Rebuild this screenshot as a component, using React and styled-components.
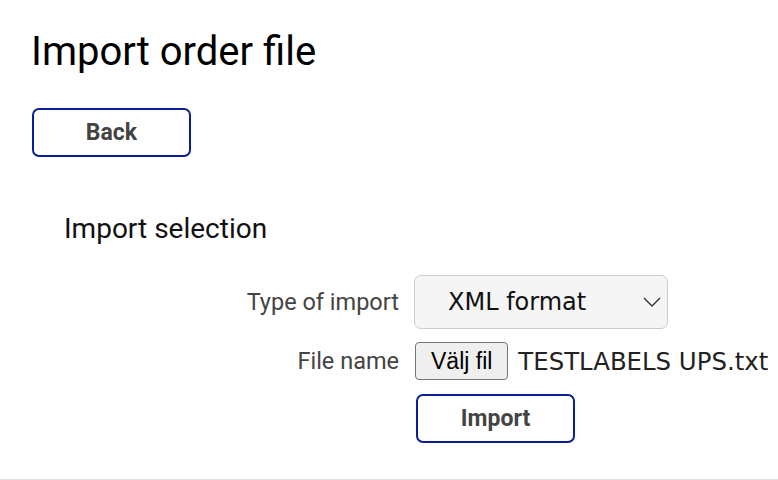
import React, { useState } from 'react';
import styled, { createGlobalStyle } from 'styled-components';

const COLOR_BORDER_BLUE = '#0b1f94';
const COLOR_TEXT_MUTED = '#444444';

const GlobalStyle = createGlobalStyle`
  html, body {
    margin: 0;
    padding: 0;
    background: #ffffff;
  }
  body {
    font-family: Roboto, "Liberation Sans", Arial, sans-serif;
    color: #000000;
  }
`;

const Page = styled.main`
  box-sizing: border-box;
  height: 480px;
  padding: 28px 0 0 31px;
  border-bottom: 1px solid #e3e3e3;
  overflow: hidden;
`;

const Title = styled.h1`
  margin: 0;
  font-size: 40px;
  line-height: 48px;
  font-weight: 400;
  color: #000000;
`;

const OutlineButton = styled.button`
  box-sizing: border-box;
  display: flex;
  align-items: center;
  justify-content: center;
  width: 159px;
  height: 49px;
  margin: ${({ $offset }) => $offset || '0'};
  padding: 0;
  background: #ffffff;
  border: 2px solid ${COLOR_BORDER_BLUE};
  border-radius: 7px;
  font-family: Roboto, "Liberation Sans", Arial, sans-serif;
  font-size: 23px;
  font-weight: 700;
  color: ${COLOR_TEXT_MUTED};
  cursor: pointer;
`;

const Section = styled.section`
  margin: 55px 0 0 33px;
`;

const SectionTitle = styled.h2`
  margin: 0;
  font-size: 28px;
  line-height: 34px;
  font-weight: 400;
  color: #111111;
`;

const FormGrid = styled.div`
  display: grid;
  grid-template-columns: 335px auto;
  column-gap: 15px;
  row-gap: 13px;
  align-items: center;
  margin-top: 29px;
`;

const Label = styled.label`
  justify-self: end;
  font-size: 23.5px;
  color: ${COLOR_TEXT_MUTED};
  white-space: nowrap;
`;

const SelectWrap = styled.div`
  position: relative;
  width: 254px;
  height: 54px;
`;

const Select = styled.select`
  box-sizing: border-box;
  appearance: none;
  width: 100%;
  height: 100%;
  padding: 0 40px 0 33px;
  background: #f5f5f5;
  border: 1.5px solid #cccccc;
  border-radius: 7px;
  font-family: "DejaVu Sans", Verdana, sans-serif;
  font-size: 24px;
  color: #111111;
`;

const Chevron = styled.svg`
  position: absolute;
  top: 22px;
  right: 7px;
  pointer-events: none;
`;

const FileRow = styled.div`
  display: flex;
  align-items: center;
`;

const FileButton = styled.button`
  box-sizing: border-box;
  height: 38px;
  padding: 0 15px;
  margin-left: 1px;
  background: #efefef;
  border: 1px solid #767676;
  border-radius: 4px;
  font-family: "Liberation Sans", Arial, sans-serif;
  font-size: 23px;
  color: #000000;
`;

const FileName = styled.span`
  margin-left: 10px;
  font-family: "DejaVu Sans", Verdana, sans-serif;
  font-size: 24.4px;
  color: #222222;
  white-space: nowrap;
`;

const App = () => {
  const [importType, setImportType] = useState('xml');

  return (
    <>
      <GlobalStyle />
      <Page>
        <Title>Import order file</Title>
        <OutlineButton $offset="32px 0 0 1px">Back</OutlineButton>

        <Section>
          <SectionTitle>Import selection</SectionTitle>
          <FormGrid>
            <Label htmlFor="import-type">Type of import</Label>
            <SelectWrap>
              <Select id="import-type" value={importType} onChange={(e) => setImportType(e.target.value)}>
                <option value="xml">XML format</option>
                <option value="csv">CSV format</option>
              </Select>
              <Chevron width="18" height="10" viewBox="0 0 18 10">
                <path d="M1 1 L9 9 L17 1" fill="none" stroke="#333" strokeWidth="1.4" />
              </Chevron>
            </SelectWrap>

            <Label>File name</Label>
            <FileRow>
              <FileButton type="button">Välj fil</FileButton>
              <FileName>TESTLABELS UPS.txt</FileName>
            </FileRow>

            <span />
            <OutlineButton $offset="1px 0 0 2px">Import</OutlineButton>
          </FormGrid>
        </Section>
      </Page>
    </>
  );
};

export default App;
